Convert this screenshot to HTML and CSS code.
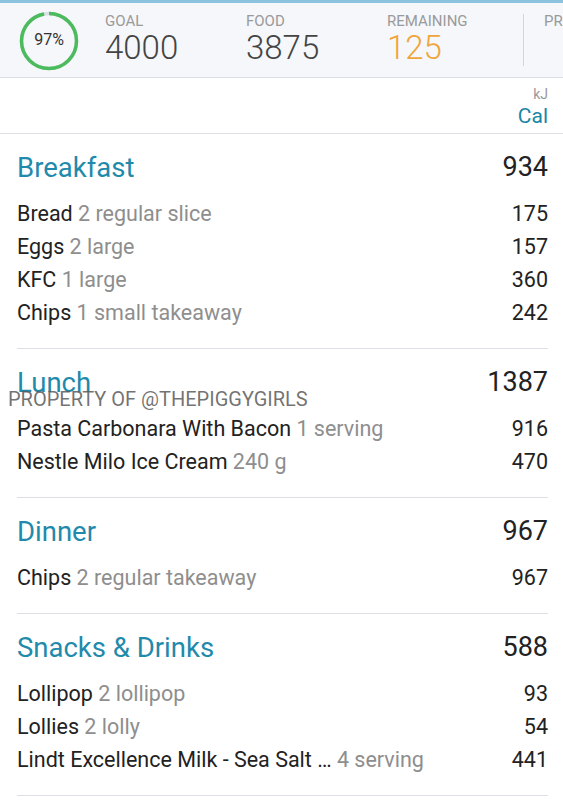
FILE: index.html
```html
<!DOCTYPE html>
<html lang="en">
<head>
<meta charset="UTF-8" />
<meta name="viewport" content="width=device-width, initial-scale=1.0"/>
<title>Diary</title>
<link rel="stylesheet" href="styles.css">
</head>
<body>

<div id="summary">
  <div class="ring">
    <svg width="62" height="62" viewBox="0 0 62 62">
      <circle cx="31" cy="31" r="27.5" fill="none" stroke="#dcdfe3" stroke-width="3.5"/>
      <!-- 97% of the circumference, starting at 12 o'clock -->
      <circle cx="31" cy="31" r="27.5" fill="none" stroke="#4cbb5e" stroke-width="3.5"
        stroke-dasharray="167.6 172.8" transform="rotate(-90 31 31)"/>
    </svg>
    <span class="ringText">97%</span>
  </div>
  <div class="stat first">
    <div class="statLabel">GOAL</div>
    <div class="statValue">4000</div>
  </div>
  <div class="stat">
    <div class="statLabel">FOOD</div>
    <div class="statValue">3875</div>
  </div>
  <div class="stat">
    <div class="statLabel">REMAINING</div>
    <div class="statValue remaining">125</div>
  </div>
  <div class="divider"></div>
  <div class="stat">
    <div class="statLabel">PROTEIN</div>
  </div>
</div>

<div id="units">
  <span class="unitOff">kJ</span>
  <span class="unitOn">Cal</span>
</div>

<div id="diary">
  <div class="meal">
    <div class="mealHead"><span class="mealName">Breakfast</span><span class="mealTotal">934</span></div>
    <div class="item"><span>Bread <span class="qty">2 regular slice</span></span><span>175</span></div>
    <div class="item"><span>Eggs <span class="qty">2 large</span></span><span>157</span></div>
    <div class="item"><span>KFC <span class="qty">1 large</span></span><span>360</span></div>
    <div class="item"><span>Chips <span class="qty">1 small takeaway</span></span><span>242</span></div>
  </div>

  <div class="meal">
    <div class="mealHead"><span class="mealName">Lunch</span><span class="mealTotal">1387</span></div>
    <div class="item"><span>Pasta Carbonara With Bacon <span class="qty">1 serving</span></span><span>916</span></div>
    <div class="item"><span>Nestle Milo Ice Cream <span class="qty">240 g</span></span><span>470</span></div>
    <div class="stamp">PROPERTY OF @THEPIGGYGIRLS</div>
  </div>

  <div class="meal">
    <div class="mealHead"><span class="mealName">Dinner</span><span class="mealTotal">967</span></div>
    <div class="item"><span>Chips <span class="qty">2 regular takeaway</span></span><span>967</span></div>
  </div>

  <div class="meal">
    <div class="mealHead"><span class="mealName">Snacks &amp; Drinks</span><span class="mealTotal">588</span></div>
    <div class="item"><span>Lollipop <span class="qty">2 lollipop</span></span><span>93</span></div>
    <div class="item"><span>Lollies <span class="qty">2 lolly</span></span><span>54</span></div>
    <div class="item"><span>Lindt Excellence Milk - Sea Salt … <span class="qty">4 serving</span></span><span>441</span></div>
  </div>
</div>

</body>
</html>
```

FILE: styles.css
```css
body {
  font-family: Roboto, "Noto Sans", sans-serif;
  background-color: #fff;
  margin: 0;
  color: #222;
  overflow: hidden;
}
#summary {
  display: flex;
  align-items: flex-start;
  height: 74px;
  background-color: #f5f7fa;
  border-top: 3px solid #8cc4e0;
  border-bottom: 1px solid #dcdfe3;
  overflow: hidden;
  white-space: nowrap;
}
.ring {
  position: relative;
  width: 62px;
  height: 62px;
  margin: 7px 0 0 18px;
  flex: none;
}
.ring svg {
  display: block;
}
.ringText {
  position: absolute;
  left: 0;
  right: 0;
  top: 20px;
  text-align: center;
  font-size: 16px;
  color: #333;
}
.stat {
  width: 141px;
  flex: none;
}
.stat.first {
  margin-left: 25px;
}
.statLabel {
  font-size: 15px;
  color: #9a9a9a;
  margin-top: 9px;
  line-height: 18px;
}
.statValue {
  font-size: 33px;
  font-weight: 300;
  line-height: 36px;
  color: #444;
}
.remaining {
  color: #f0a53a;
}
.divider {
  width: 1px;
  height: 52px;
  margin: 11px 20px 0 -5px;
  background-color: #d4d6d9;
  flex: none;
}
#units {
  display: flex;
  flex-direction: column;
  align-items: flex-end;
  padding: 7px 15px 0 0;
  height: 48px;
  border-bottom: 1px solid #dcdfe3;
}
.unitOff {
  font-size: 14px;
  color: #999;
  line-height: 18px;
}
.unitOn {
  font-size: 21px;
  color: #1c86a6;
  line-height: 26px;
}
#diary {
  padding: 0 15px 0 17px;
}
.meal {
  position: relative;
  padding: 16px 0 19px;
  border-bottom: 1px solid #dcdfe3;
}
.mealHead {
  display: flex;
  justify-content: space-between;
  align-items: center;
  height: 34px;
  margin-bottom: 13px;
}
.mealName {
  font-size: 27.5px;
  color: #1f8aab;
}
.mealTotal {
  font-size: 27px;
  color: #222;
}
.item {
  display: flex;
  justify-content: space-between;
  font-size: 21.5px;
  line-height: 33px;
  height: 33px;
  white-space: nowrap;
}
.qty {
  color: #8e8e8e;
}
.stamp {
  position: absolute;
  left: -9px;
  top: 38px;
  font-size: 20px;
  color: rgba(90, 90, 90, 0.85);
  line-height: 24px;
}
```
